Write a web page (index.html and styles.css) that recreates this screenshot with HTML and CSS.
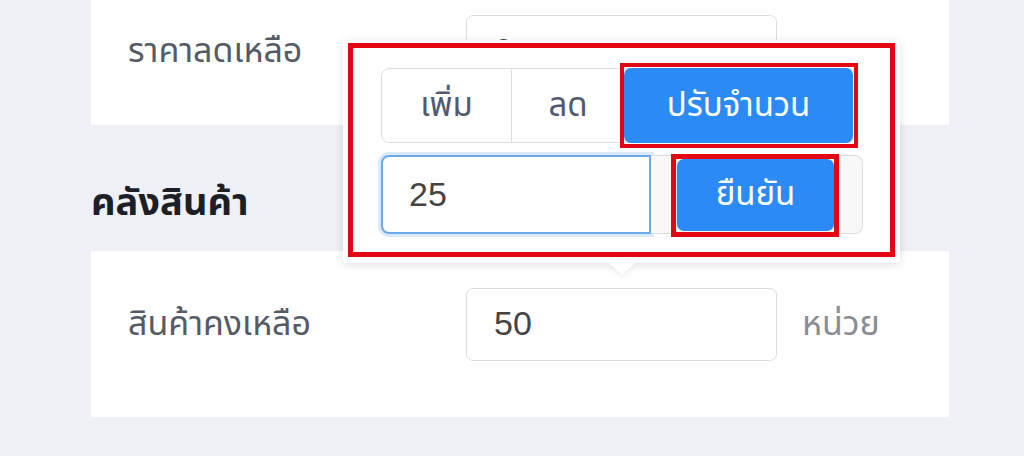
FILE: index.html
```html
<!DOCTYPE html>
<html lang="th">
<head>
    <meta charset="UTF-8">
    <meta name="viewport" content="width=device-width, initial-scale=1.0">
    <title>คลังสินค้า</title>
    <link rel="stylesheet" href="styles.css">
</head>
<body>
    <div id="page">
        <div class="card first">
            <div class="row">
                <label class="label">ราคาลดเหลือ</label>
                <input class="field" type="text" value="0">
            </div>
        </div>

        <h2 class="title">คลังสินค้า</h2>

        <div class="card second">
            <div class="row">
                <label class="label">สินค้าคงเหลือ</label>
                <input class="field" type="text" value="50">
                <span class="unit">หน่วย</span>
            </div>
        </div>

        <div id="pop">
            <div class="frame">
                <div class="seg">
                    <button class="seg-btn add">เพิ่ม</button>
                    <button class="seg-btn minus">ลด</button>
                    <button class="seg-btn set active">ปรับจำนวน</button>
                </div>
                <div class="group">
                    <input class="amount" type="text" value="25">
                    <div class="append">
                        <button class="ok">ยืนยัน</button>
                    </div>
                </div>
            </div>
            <div class="arrow"></div>
        </div>
    </div>
</body>
</html>
```

FILE: styles.css
```css
body {
    margin: 0;
    background-color: #eef0f6;
    font-family: "Noto Sans Thai", "Noto Sans", "DejaVu Sans", sans-serif;
    color: #515a6e;
}
#page {
    position: relative;
    width: 858px;
    margin-left: 91px;
}
.card {
    background: #fff;
}
.card.first {
    padding: 15px 0 37px 37px;
}
.card.second {
    padding: 37px 0 56px 37px;
}
.row {
    display: flex;
    align-items: center;
    height: 73px;
}
.label {
    width: 338px;
    font-size: 34px;
    color: #555b66;
}
.field {
    box-sizing: border-box;
    width: 311px;
    height: 73px;
    border: 1px solid #dcdee2;
    border-radius: 7px;
    padding: 0 27px 2px;
    font-family: "Liberation Sans", sans-serif;
    font-size: 34px;
    color: #444;
}
.unit {
    margin-left: 25px;
    font-size: 34px;
    color: #8a8d93;
}
.title {
    margin: 0;
    height: 126px;
    box-sizing: border-box;
    padding-top: 30px;
    display: flex;
    align-items: center;
    font-size: 38px;
    font-weight: 700;
    color: #1c1f26;
}
#pop {
    position: absolute;
    left: 252px;
    top: 40px;
    width: 557px;
    height: 223px;
    box-sizing: border-box;
    padding: 3px 5px;
    background: #fff;
    border-radius: 4px;
    box-shadow: 0 2px 10px rgba(0, 0, 0, 0.12);
}
.frame {
    box-sizing: border-box;
    height: 214px;
    border: 5px solid #e30613;
    padding: 20px 28px 0 28px;
}
.seg {
    display: flex;
    width: 475px;
    height: 75px;
    box-sizing: border-box;
    border: 1px solid #dcdee2;
    border-radius: 8px;
}
.seg-btn {
    border: none;
    background: none;
    font-family: inherit;
    font-size: 33px;
    color: #515a6e;
}
.add {
    width: 130px;
    border-right: 1px solid #dcdee2;
}
.minus {
    width: 112px;
}
.set {
    position: relative;
    width: 229px;
    margin: -1px 0;
    background: #2b8af5;
    color: #fff;
    border-radius: 7px;
}
.set::after {
    content: "";
    position: absolute;
    inset: -5px -5px -5px -4px;
    border: 4px solid #e30613;
}
.group {
    display: flex;
    width: 482px;
    height: 79px;
    margin-top: 12px;
}
.amount {
    box-sizing: border-box;
    width: 270px;
    border: 2px solid #6aaae8;
    border-radius: 8px 0 0 8px;
    box-shadow: 0 0 0 3px rgba(45, 140, 240, 0.18);
    padding: 0 26px;
    font-family: "Liberation Sans", sans-serif;
    font-size: 34px;
    color: #444;
}
.append {
    flex: 1;
    box-sizing: border-box;
    display: flex;
    padding: 3px 28px 2px 26px;
    background: #f8f8f9;
    border: 1px solid #dcdee2;
    border-left: none;
    border-radius: 0 8px 8px 0;
}
.ok {
    position: relative;
    flex: 1;
    border: none;
    border-radius: 7px;
    background: #2b8af5;
    color: #fff;
    font-family: inherit;
    font-size: 33px;
}
.ok::after {
    content: "";
    position: absolute;
    inset: -5px -5px -6px -6px;
    border: 5px solid #e30613;
}
.arrow {
    position: absolute;
    left: 266px;
    bottom: -12px;
    width: 0;
    height: 0;
    border-left: 13px solid transparent;
    border-right: 13px solid transparent;
    border-top: 12px solid #fff;
    filter: drop-shadow(0 3px 2px rgba(0, 0, 0, 0.06));
}
```
